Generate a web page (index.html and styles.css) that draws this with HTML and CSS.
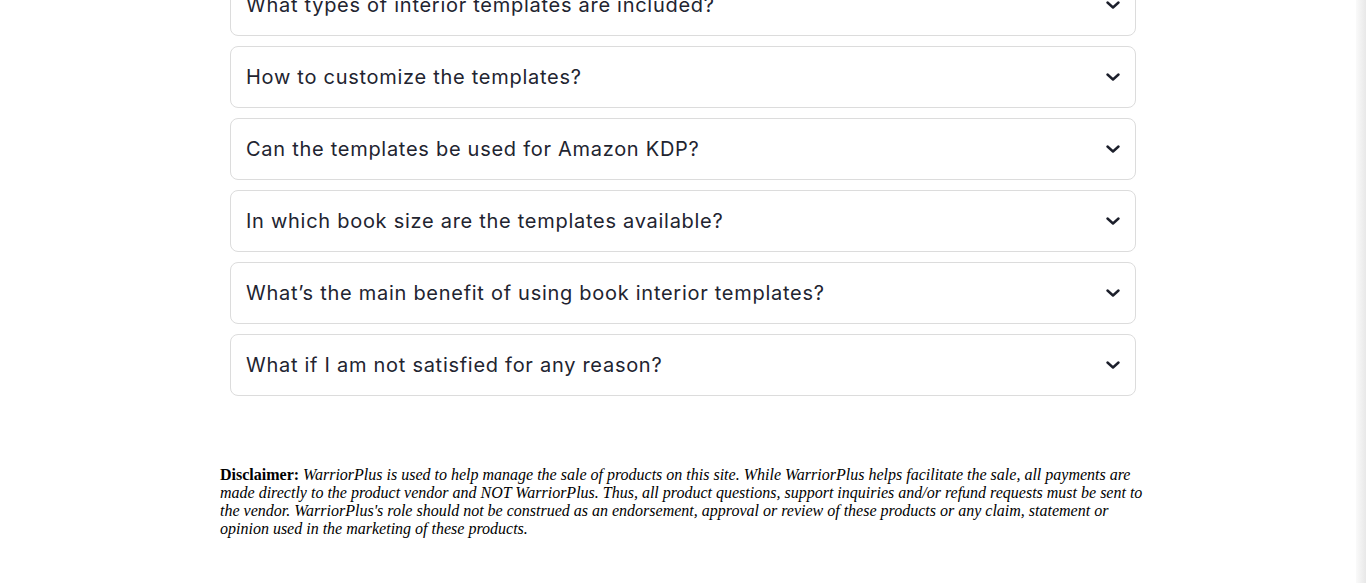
FILE: index.html
```html
<!DOCTYPE html>
<html>
<head>
<meta charset="utf-8">
<link rel="stylesheet" href="styles.css">
</head>
<body>
<div class="page">
  <div class="faq">
    <div class="item"><span>What types of interior templates are included?</span><svg class="chev" viewBox="0 0 14 10"><path d="M1.5 2.5 L7 7.5 L12.5 2.5" /></svg></div>
    <div class="item"><span>How to customize the templates?</span><svg class="chev" viewBox="0 0 14 10"><path d="M1.5 2.5 L7 7.5 L12.5 2.5" /></svg></div>
    <div class="item"><span>Can the templates be used for Amazon KDP?</span><svg class="chev" viewBox="0 0 14 10"><path d="M1.5 2.5 L7 7.5 L12.5 2.5" /></svg></div>
    <div class="item"><span>In which book size are the templates available?</span><svg class="chev" viewBox="0 0 14 10"><path d="M1.5 2.5 L7 7.5 L12.5 2.5" /></svg></div>
    <div class="item"><span>What’s the main benefit of using book interior templates?</span><svg class="chev" viewBox="0 0 14 10"><path d="M1.5 2.5 L7 7.5 L12.5 2.5" /></svg></div>
    <div class="item"><span>What if I am not satisfied for any reason?</span><svg class="chev" viewBox="0 0 14 10"><path d="M1.5 2.5 L7 7.5 L12.5 2.5" /></svg></div>
  </div>
  <p class="disclaimer"><b>Disclaimer:</b> <i>WarriorPlus is used to help manage the sale of products on this site. While WarriorPlus helps facilitate the sale, all payments are made directly to the product vendor and NOT WarriorPlus. Thus, all product questions, support inquiries and/or refund requests must be sent to the vendor. WarriorPlus's role should not be construed as an endorsement, approval or review of these products or any claim, statement or opinion used in the marketing of these products.</i></p>
</div>
<div class="scrollbar"></div>
</body>
</html>
```
FILE: styles.css
```css
html, body {
  margin: 0;
  padding: 0;
  background: #fff;
  overflow: hidden;
}
.page {
  width: 926px;
  margin: -26px auto 0;
}
.faq {
  display: flex;
  flex-direction: column;
  gap: 10px;
  padding: 0 10px;
}
.item {
  height: 60px;
  border: 1px solid #dcdcdc;
  border-radius: 8px;
  display: flex;
  align-items: center;
  justify-content: space-between;
  padding: 0 15px;
  font-family: Inter, "Open Sans", sans-serif;
  font-size: 20px;
  letter-spacing: 0.72px;
  color: #222430;
}
.chev {
  width: 14px;
  height: 10px;
}
.chev path {
  fill: none;
  stroke: #1c1f2b;
  stroke-width: 2.4;
  stroke-linecap: round;
  stroke-linejoin: round;
}
.disclaimer {
  margin: 70px 0 0;
  font-family: "Liberation Serif", serif;
  font-size: 16px;
  line-height: 18px;
  color: #000;
}
.scrollbar {
  position: fixed;
  top: 0;
  right: 0;
  width: 10px;
  height: 100%;
  background: linear-gradient(to right, #fafafa, #e8e8e8);
}
```
